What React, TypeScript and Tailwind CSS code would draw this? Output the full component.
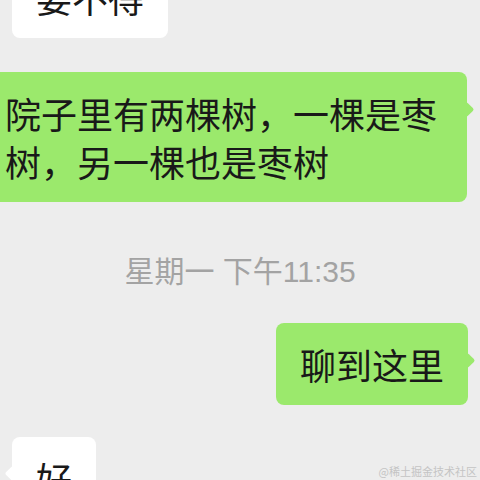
import React from 'react';

const cjk = { fontFamily: '"Noto Sans CJK SC", "Noto Sans", sans-serif' };

interface BubbleProps {
  side: 'left' | 'right';
  children: React.ReactNode;
}

const Bubble: React.FC<BubbleProps> = ({ side, children }) => {
  const bg = side === 'right' ? 'bg-[#9be96c]' : 'bg-white';
  return (
    <div className={`relative rounded-[8px] px-6 py-[17px] text-[36px] leading-[48px] text-[#191919] ${bg}`} style={cjk}>
      {side === 'right' ? (
        <span className={`absolute right-[-5px] top-[32px] w-[11px] h-[11px] rotate-45 rounded-[2px] ${bg}`} />
      ) : (
        <span className={`absolute left-[-5px] top-[31px] w-[11px] h-[11px] rotate-45 rounded-[2px] ${bg}`} />
      )}
      <div className="relative">{children}</div>
    </div>
  );
};

export default function App() {
  return (
    <div className="relative w-[480px] h-[480px] overflow-hidden bg-[#ededed]">
      <div className="flex flex-col mt-[-44px]">
        <div className="flex justify-start pl-3">
          <Bubble side="left">要不得</Bubble>
        </div>

        <div className="flex justify-end pr-[13px] mt-[34px]">
          <Bubble side="right">
            <div className="w-[438px]">院子里有两棵树，一棵是枣树，另一棵也是枣树</div>
          </Bubble>
        </div>

        <div
          className="mt-[50px] h-[40px] leading-[40px] text-center text-[30px] text-[#a3a3a3]"
          style={{ fontFamily: '"Liberation Sans", "Noto Sans CJK SC", sans-serif' }}
        >
          星期一 下午11:35
        </div>

        <div className="flex justify-end pr-3 mt-[31px]">
          <Bubble side="right">聊到这里</Bubble>
        </div>

        <div className="flex justify-start pl-3 mt-[32px]">
          <Bubble side="left">好</Bubble>
        </div>
      </div>

      <div className="absolute right-[3px] bottom-[2px] text-[11px] leading-[14px] text-[#c4c4c4]" style={cjk}>
        @稀土掘金技术社区
      </div>
    </div>
  );
}
